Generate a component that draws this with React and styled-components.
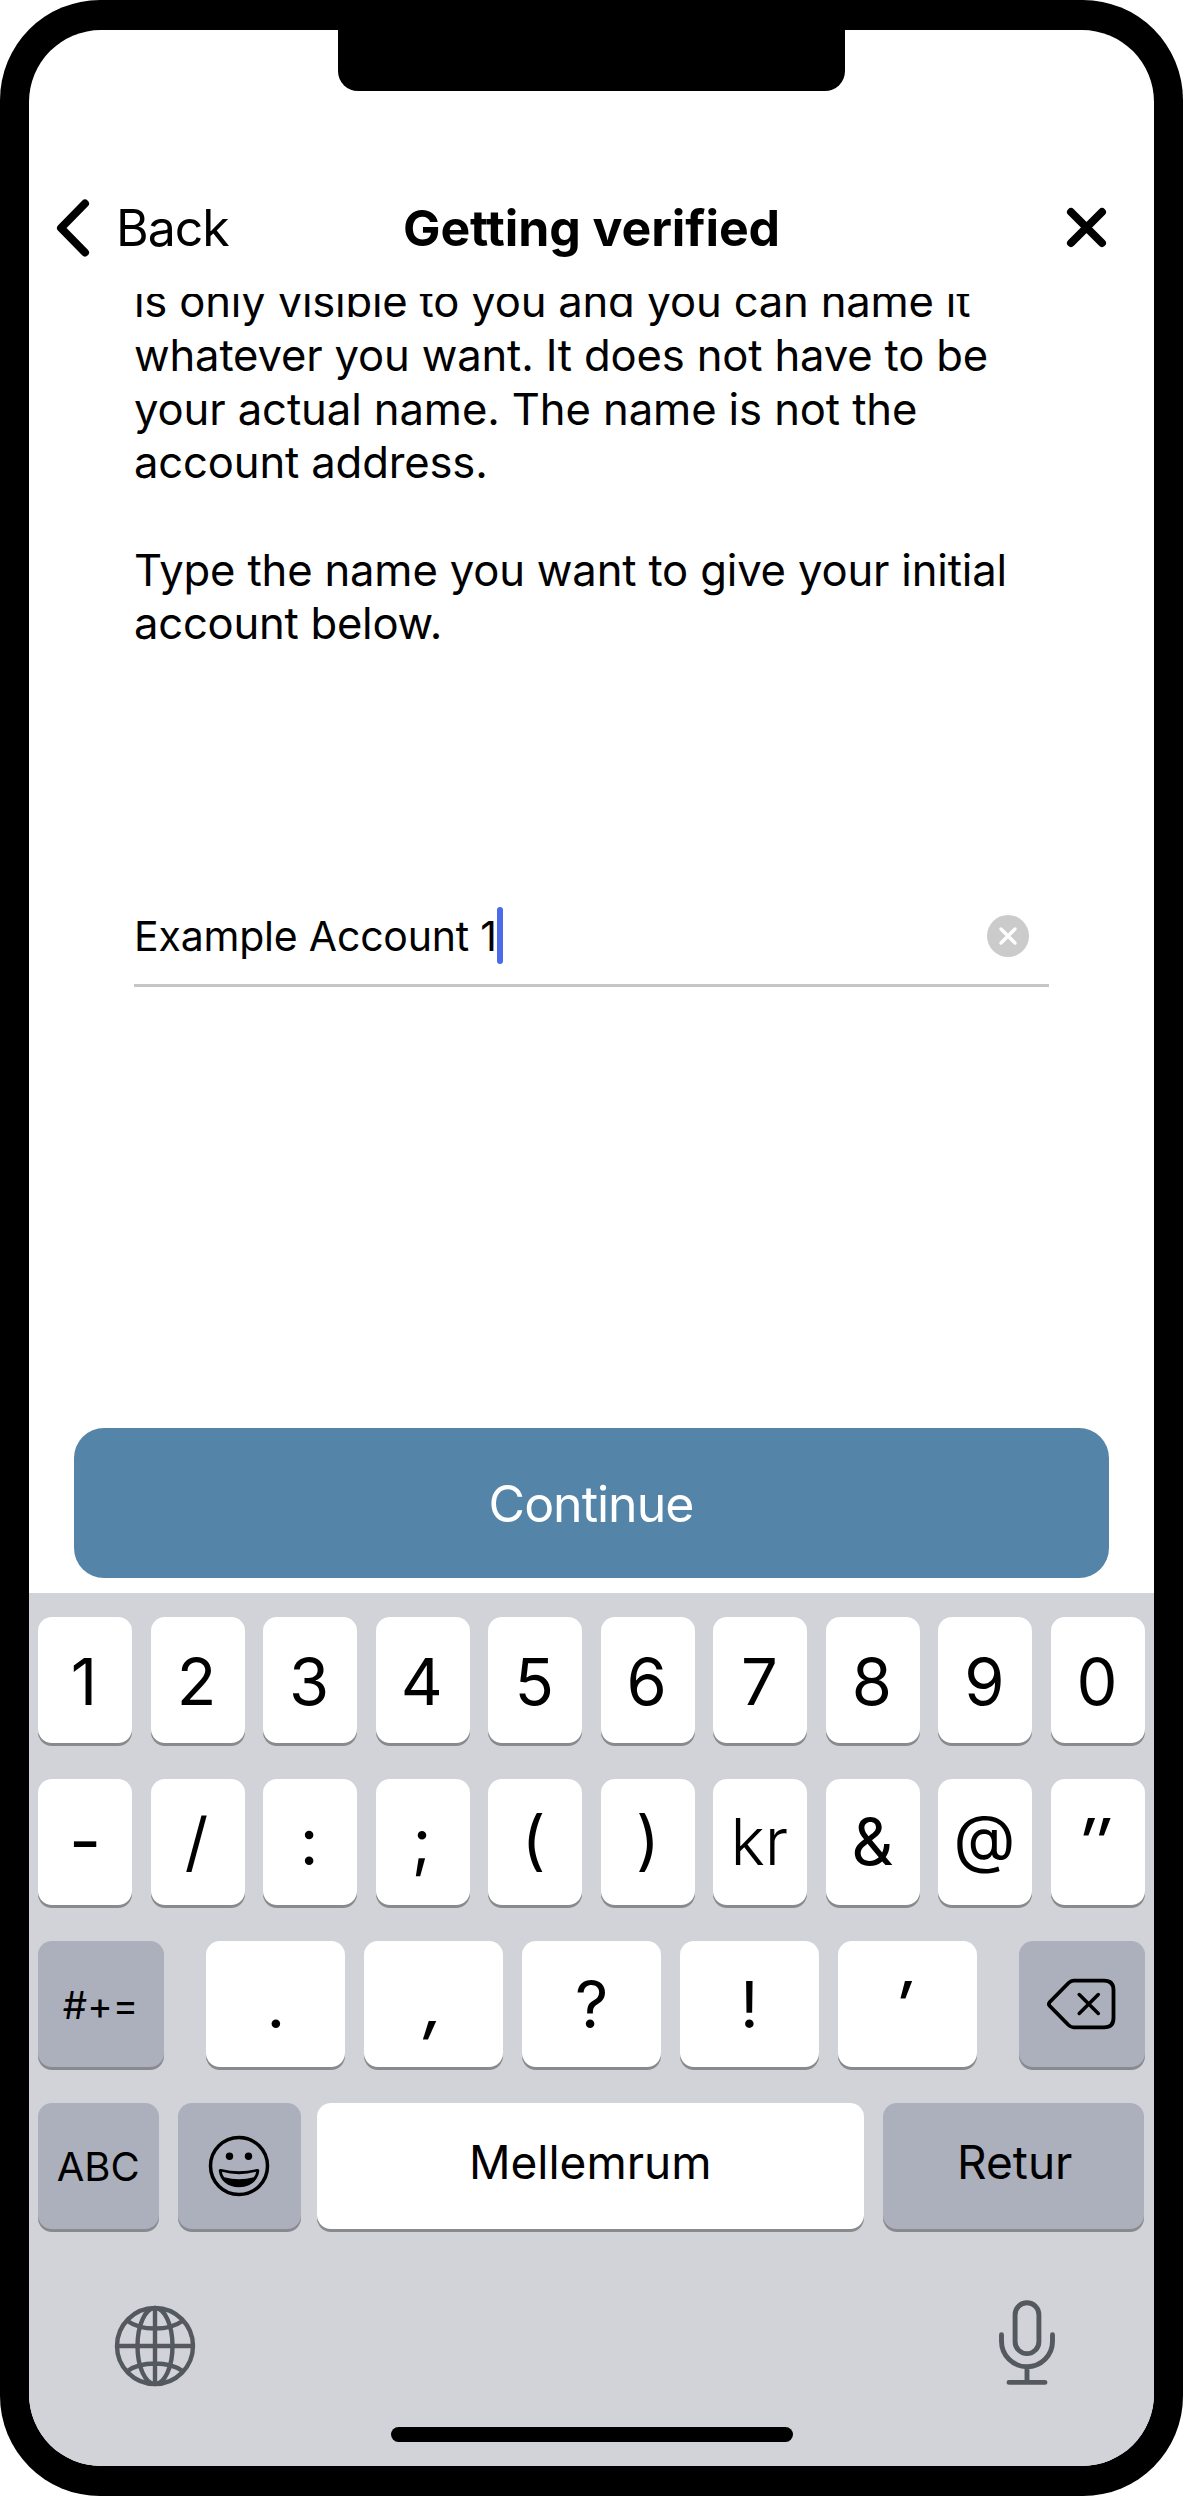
import React from "react";
import styled, { createGlobalStyle } from "styled-components";

const Global = createGlobalStyle`
  * { box-sizing: border-box; }
  html, body { margin: 0; padding: 0; background: #fff; }
  body { font-family: Inter, "Liberation Sans", sans-serif; color: #000; font-kerning: normal; }
  button { font-family: inherit; color: inherit; border: 0; padding: 0; margin: 0; background: none; }
`;

const Device = styled.div`
  position: relative;
  width: 1183px;
  height: 2496px;
  padding: 30px 29px;
  background: #000;
  border-radius: 100px;
`;

const Screen = styled.div`
  display: flex;
  flex-direction: column;
  height: 2436px;
  border-radius: 72px;
  background: #fff;
  overflow: hidden;
`;

const Notch = styled.div`
  position: absolute;
  top: 29px;
  left: 338px;
  width: 507px;
  height: 62px;
  background: #000;
  border-radius: 0 0 20px 20px;
`;

const Header = styled.header`
  flex: none;
  display: grid;
  grid-template-columns: 1fr auto 1fr;
  align-items: center;
  height: 132px;
  margin-top: 132px;
  padding: 0 26px;
`;

const BackButton = styled.button`
  display: flex;
  align-items: center;
  gap: 24px;
  margin-left: -1px;
  font-size: 50px;
  letter-spacing: -1px;
  line-height: 60px;
`;

const Title = styled.h1`
  margin: 0;
  font-size: 50px;
  font-weight: 700;
  letter-spacing: -0.1px;
  line-height: 60px;
  white-space: nowrap;
`;

const CloseButton = styled.button`
  justify-self: end;
  display: flex;
  margin-right: 17px;
`;

const Content = styled.main`
  flex: none;
  display: flex;
  flex-direction: column;
  height: 1299px;
  padding: 0 45px 15px;
  overflow: hidden;
`;

const Copy = styled.div`
  margin: -18.700px 0 0 60px;
  font-size: 43.6px;
  line-height: 53.7px;
  white-space: nowrap;
`;

const Line = styled.div`
  height: 53.7px;
  letter-spacing: ${(p) => p.$ls || 0}px;
`;

const Field = styled.div`
  display: flex;
  align-items: center;
  height: 99px;
  margin: 236.700px 60px 0;
  padding-right: 20px;
  border-bottom: 3px solid #c6c6c6;
`;

const Value = styled.span`
  font-size: 41px;
  letter-spacing: -0.2px;
  white-space: nowrap;
`;

const Caret = styled.span`
  width: 6px;
  height: 57px;
  border-radius: 3px;
  background: #4b6bea;
`;

const ClearButton = styled.button`
  display: flex;
  margin-left: auto;
`;

const Continue = styled.button`
  height: 150px;
  margin-top: auto;
  padding: 2px 1px 0 0;
  border-radius: 30px;
  background: #5584a9;
  color: #fff;
  font-size: 50px;
  letter-spacing: -1px;
`;

const Keyboard = styled.section`
  flex: 1;
  display: flex;
  flex-direction: column;
  gap: 36px;
  padding: 24px 9px 0;
  background: #d2d3d9;
`;

const KeyRow = styled.div`
  display: flex;
  justify-content: ${(p) => (p.$packed ? "flex-start" : "space-between")};
  height: 126px;
`;

const PunctuationKeys = styled.div`
  display: flex;
  justify-content: space-between;
  width: 770.5px;
`;

const Key = styled.button`
  flex: none;
  display: flex;
  align-items: center;
  justify-content: center;
  width: ${(p) => p.$w || 94}px;
  height: 126px;
  margin-left: ${(p) => p.$before || 0}px;
  padding: ${(p) => p.$drop || 0}px ${(p) => p.$left || 0}px ${(p) => p.$lift || 0}px ${(p) => p.$right || 0}px;
  border-radius: 14px;
  background: ${(p) => (p.$dark ? "#abb0bc" : "#fff")};
  box-shadow: 0 3px 0 #898a8e;
  font-size: ${(p) => p.$size || 65}px;
  font-weight: ${(p) => p.$weight || 400};
  font-style: ${(p) => (p.$slanted ? "italic" : "normal")};
  line-height: 1;
`;

const Footer = styled.div`
  display: flex;
  justify-content: space-between;
  height: 92px;
  margin-top: 34px;
  padding: 0 89px 0 76px;
`;

const GlobeButton = styled.button`
  display: flex;
  align-self: flex-start;
  margin-top: 6px;
`;

const MicButton = styled.button`
  display: flex;
  align-self: flex-start;
`;

const HomeBar = styled.div`
  align-self: center;
  width: 402px;
  height: 15px;
  border-radius: 8px;
  background: #000;
`;

const copy = [
  ["is only visible to you and you can name it", -0.2],
  ["whatever you want. It does not have to be", -0.17],
  ["your actual name. The name is not the", -0.1],
  ["account address.", -0.15],
  ["", 0],
  ["Type the name you want to give your initial", -0.17],
  ["account below.", -0.25],
];

const digits = ["1", "2", "3", "4", "5", "6", "7", "8", "9", "0"];

const symbols = [
  { label: "-", lift: 2, size: 70 },
  { label: "/", lift: 2, left: 2 },
  { label: ":", lift: 2, left: 2 },
  { label: ";", lift: 2, left: 2 },
  { label: "(", lift: 5, left: 3 },
  { label: ")", lift: 5 },
  { label: "kr", lift: 2, left: 2, weight: 350 },
  { label: "&", lift: 1, left: 1 },
  { label: "@", lift: 9, left: 2, size: 64 },
  { label: "″", lift: 1, left: 9, slanted: true, weight: 500 },
];

const punctuation = [
  { label: "." },
  { label: ",", slanted: true, weight: 500 },
  { label: "?" },
  { label: "!" },
  { label: "′", left: 9, slanted: true, weight: 500 },
];

const BackIcon = () => (
  <svg width="38" height="62" viewBox="0 0 38 62" fill="none" stroke="#000" strokeWidth="8" strokeLinecap="round" strokeLinejoin="round">
    <path d="M31 6.500L7 31L31 55.500" />
  </svg>
);

const CloseIcon = () => (
  <svg width="48" height="48" viewBox="0 0 48 48" fill="none" stroke="#000" strokeWidth="8" strokeLinecap="round">
    <path d="M8 8L39 39M39 8L8 39" />
  </svg>
);

const ClearIcon = () => (
  <svg width="42" height="42" viewBox="0 0 42 42" fill="none">
    <circle cx="21" cy="21" r="21" fill="#cbcbcb" />
    <path d="M14 14L28 28M28 14L14 28" stroke="#fff" strokeWidth="3.400" strokeLinecap="round" />
  </svg>
);

const BackspaceIcon = () => (
  <svg width="72" height="52" viewBox="0 0 72 52" fill="none" stroke="#000" strokeWidth="3.800" strokeLinecap="round" strokeLinejoin="round">
    <path d="M27.500 2.600H58Q67.500 2.600 67.500 12V40Q67.500 49.400 58 49.400H27.500Q25 49.400 22.500 47L3.800 28Q2 26 3.800 24L22.500 5Q25 2.600 27.500 2.600Z" />
    <path d="M33.200 16.500L52.300 35.500M52.300 16.500L33.200 35.500" strokeWidth="3.500" />
  </svg>
);

const SmileyIcon = () => (
  <svg width="62" height="62" viewBox="0 0 62 62" fill="none">
    <circle cx="31" cy="31" r="28.500" stroke="#000" strokeWidth="3.500" />
    <circle cx="21.500" cy="21.300" r="3.700" fill="#000" />
    <circle cx="40.500" cy="21.300" r="3.700" fill="#000" />
    <path d="M13 34Q10.500 33.500 10.800 36C12 46 20 52.200 31 52.200C42 52.200 50 46 51.300 36Q51.500 33.500 49 34Q31 38.500 13 34Z" fill="#000" />
    <path d="M13.800 36.800Q31 41.500 48.200 36.800Q47.700 40 45.800 42.200Q31 46.500 16.200 42.200Q14.300 40 13.800 36.800Z" fill="#abb0bc" />
  </svg>
);

const GlobeIcon = () => (
  <svg width="82" height="82" viewBox="0 0 82 82" fill="none" stroke="#54585f" strokeWidth="4.400">
    <circle cx="41" cy="41" r="38" />
    <ellipse cx="41" cy="41" rx="17.500" ry="38" />
    <path d="M41 3V79M3 41H79M13.500 16Q24 23.500 41 23.500Q58 23.500 68.500 16M13.500 66Q24 58.500 41 58.500Q58 58.500 68.500 66" />
  </svg>
);

const MicIcon = () => (
  <svg width="58" height="87" viewBox="0 0 58 87" fill="none" stroke="#54585f" strokeWidth="4.900" strokeLinecap="round">
    <rect x="17.100" y="3.800" width="23.800" height="50.800" rx="11.900" />
    <path d="M3.500 35.800V42.300A25.500 25.500 0 0 0 54.500 42.300V35.800M29 68V83M11 83.400H47" />
  </svg>
);

export default function App() {
  return (
    <>
      <Global />
      <Device>
        <Notch />
        <Screen>
          <Header>
            <BackButton><BackIcon />Back</BackButton>
            <Title>Getting verified</Title>
            <CloseButton><CloseIcon /></CloseButton>
          </Header>
          <Content>
            <Copy>
              {copy.map(([text, ls], i) => <Line key={i} $ls={ls}>{text}</Line>)}
            </Copy>
            <Field>
              <Value>Example Account 1</Value>
              <Caret />
              <ClearButton><ClearIcon /></ClearButton>
            </Field>
            <Continue>Continue</Continue>
          </Content>
          <Keyboard>
            <KeyRow>
              {digits.map((d) => <Key key={d} $drop={3} $left={2}>{d}</Key>)}
            </KeyRow>
            <KeyRow>
              {symbols.map((s) => (
                <Key key={s.label} $lift={s.lift} $left={s.left} $size={s.size} $weight={s.weight} $slanted={s.slanted}>
                  {s.label}
                </Key>
              ))}
            </KeyRow>
            <KeyRow>
              <Key $w={126} $dark $size={38.5} $drop={2} $left={1}>#+=</Key>
              <PunctuationKeys>
                {punctuation.map((s) => (
                  <Key key={s.label} $w={139} $left={s.left} $weight={s.weight} $slanted={s.slanted}>{s.label}</Key>
                ))}
              </PunctuationKeys>
              <Key $w={126} $dark><BackspaceIcon /></Key>
            </KeyRow>
            <KeyRow $packed>
              <Key $w={120.5} $dark $size={40} $drop={2}>ABC</Key>
              <Key $w={123.5} $before={19} $dark><SmileyIcon /></Key>
              <Key $w={546.5} $before={16} $size={46} $lift={8}>Mellemrum</Key>
              <Key $w={261.5} $before={19} $dark $size={46} $lift={8} $right={3}>Retur</Key>
            </KeyRow>
            <Footer>
              <GlobeButton><GlobeIcon /></GlobeButton>
              <MicButton><MicIcon /></MicButton>
            </Footer>
            <HomeBar />
          </Keyboard>
        </Screen>
      </Device>
    </>
  );
}
